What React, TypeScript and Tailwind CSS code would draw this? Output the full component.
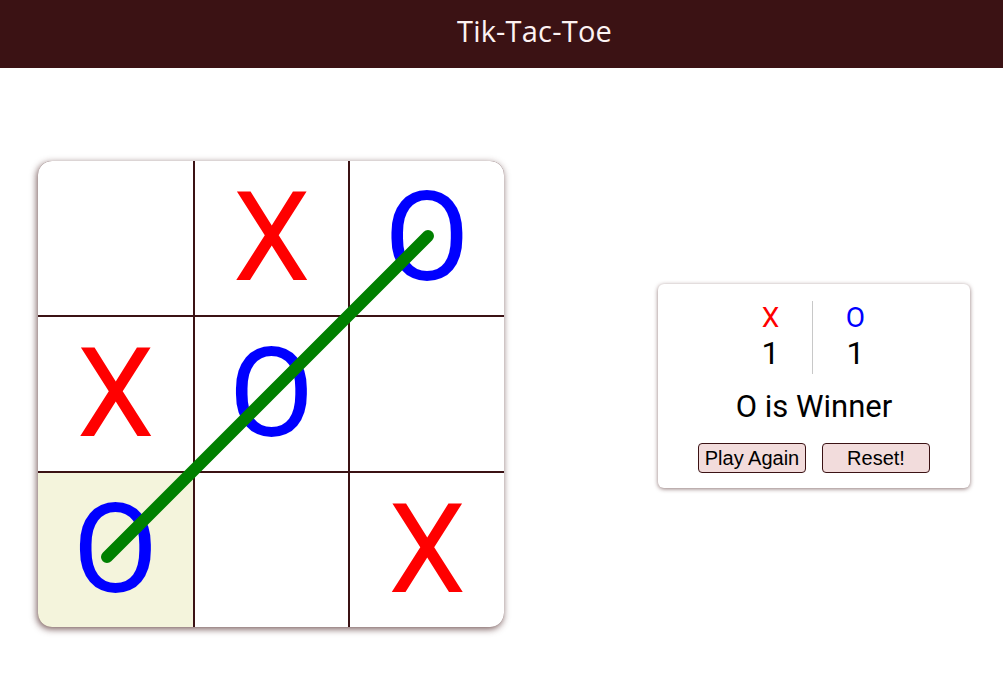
import React from 'react';

type Mark = 'X' | 'O' | '';

const board: Mark[] = ['', 'X', 'O', 'X', 'O', '', 'O', '', 'X'];

// 获胜格子
const winCells = [2, 4, 6];

export default function App() {
  return (
    <div className="min-h-[680px] w-full bg-white" style={{ fontFamily: 'Roboto, "Liberation Sans", sans-serif' }}>
      {/* 顶部标题栏 */}
      <header className="h-[68px] bg-[#3b1214] flex items-center justify-center pl-[66px]">
        <h1 className="text-[29px] text-[#fdf2f2] tracking-[0.2px] mt-[-6px]" style={{ fontFamily: '"Open Sans", sans-serif' }}>
          Tik-Tac-Toe
        </h1>
      </header>

      <main className="flex items-start pl-[38px] pt-[93px]">
        {/* 棋盘 */}
        <div className="relative w-[466px] h-[466px] rounded-[14px] overflow-hidden shadow-[-1px_2px_7px_rgba(70,30,30,0.75)]">
          <div className="grid grid-cols-[155px_153px_154px] grid-rows-[154px_154px_154px] gap-[2px] bg-[#3b1214] w-full h-full">
            {board.map((m, i) => (
              <div
                key={i}
                className={`flex items-center justify-center text-[124px] leading-none ${
                  i === 6 ? 'bg-[#f4f4dc]' : 'bg-white'
                } ${m === 'X' ? 'text-[#ff0000]' : 'text-[#0000ff]'}`}
              >
                {m}
              </div>
            ))}
          </div>
          {/* 获胜连线 */}
          <svg className="absolute inset-0 pointer-events-none" width="466" height="466" data-win={winCells.join(',')}>
            <line x1="69" y1="396" x2="390" y2="75" stroke="#008000" strokeWidth="12" strokeLinecap="round" />
          </svg>
        </div>

        {/* 计分面板 */}
        <div className="ml-[154px] mt-[123px] w-[312px] h-[204px] rounded-[6px] bg-white shadow-[0_1px_4px_rgba(70,30,30,0.6)] flex flex-col items-center pt-[17px]">
          <div className="flex items-stretch h-[73px]">
            <div className="w-[82px] flex flex-col items-center">
              <span className="text-[28px] leading-[34px] text-[#ff0000]">X</span>
              <span className="text-[32px] leading-[36px] text-black">1</span>
            </div>
            <div className="w-px bg-[#c8c8c8]" />
            <div className="w-[86px] flex flex-col items-center">
              <span className="text-[28px] leading-[34px] text-[#0000ff]">O</span>
              <span className="text-[32px] leading-[36px] text-black">1</span>
            </div>
          </div>
          <div className="mt-[15px] text-[31px] leading-[36px] text-black">O is Winner</div>
          <div className="mt-[18px] flex gap-[16px]" style={{ fontFamily: '"Liberation Sans", Arial, sans-serif' }}>
            <button className="w-[108px] h-[30px] rounded-[4px] border border-[#3b1214] bg-[#f2dcdc] text-[20px] text-black leading-none">
              Play Again
            </button>
            <button className="w-[108px] h-[30px] rounded-[4px] border border-[#3b1214] bg-[#f2dcdc] text-[20px] text-black leading-none">
              Reset!
            </button>
          </div>
        </div>
      </main>
    </div>
  );
}
